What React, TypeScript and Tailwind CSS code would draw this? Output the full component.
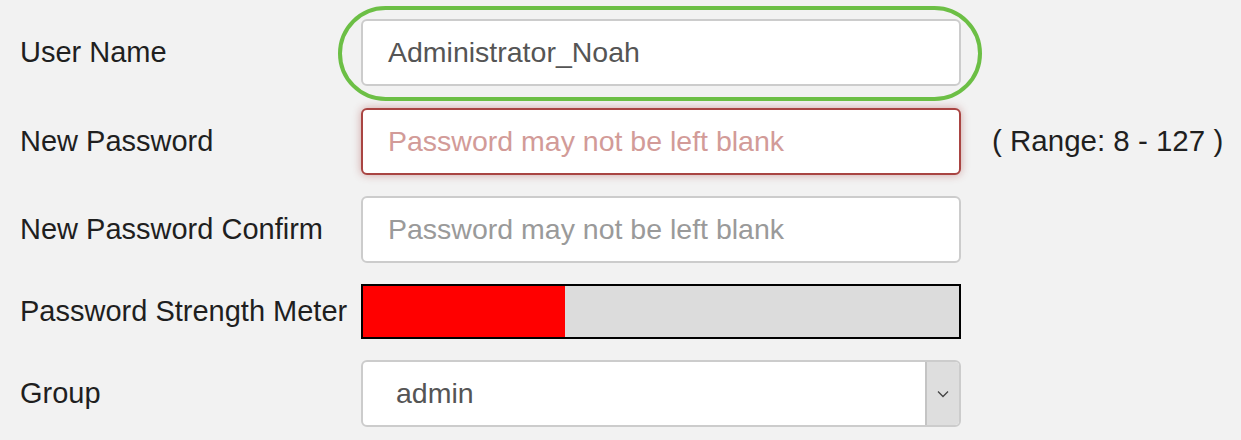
const labelCls = "w-[361px] shrink-0 pl-5 text-[29px] text-[#1f1f1f]";

const App = () => {
  return (
    <div
      className="w-[1241px] h-[440px] bg-[#f2f2f2] pt-[19px] overflow-hidden"
      style={{ fontFamily: '"Liberation Sans", Arial, sans-serif' }}
    >
      {/* User Name */}
      <div className="flex items-center h-[67px]">
        <div className={labelCls}>User Name</div>
        <div className="relative">
          <div className="absolute -left-[23px] -top-[13px] w-[644px] h-[95px] rounded-[48px] border-[4px] border-[#6cbf45] pointer-events-none" />
          <div className="w-[600px] h-[67px] bg-white border-2 border-[#cccccc] rounded-[6px] flex items-center pl-[25px] text-[28.5px] text-[#555]">
            Administrator_Noah
          </div>
        </div>
      </div>

      {/* New Password */}
      <div className="flex items-center h-[67px] mt-[22px]">
        <div className={labelCls}>New Password</div>
        <div className="w-[600px] h-[67px] bg-white border-2 border-[#a94442] rounded-[6px] shadow-[0_0_8px_rgba(169,68,66,0.45)] flex items-center pl-[25px] text-[28.5px] text-[#d29b98]">
          Password may not be left blank
        </div>
        <div className="ml-[31px] text-[29.5px] text-[#1f1f1f]">( Range: 8 - 127 )</div>
      </div>

      {/* New Password Confirm */}
      <div className="flex items-center h-[67px] mt-[21px]">
        <div className={labelCls}>New Password Confirm</div>
        <div className="w-[600px] h-[67px] bg-white border-2 border-[#cccccc] rounded-[6px] flex items-center pl-[25px] text-[28.5px] text-[#9a9a9a]">
          Password may not be left blank
        </div>
      </div>

      {/* Strength meter */}
      <div className="flex items-center h-[55px] mt-[21px]">
        <div className={labelCls}>Password Strength Meter</div>
        <div className="w-[600px] h-[55px] border-2 border-black bg-[#dcdcdc] flex">
          <div className="h-full bg-[#ff0000]" style={{ width: 202 }} />
        </div>
      </div>

      {/* Group */}
      <div className="flex items-center h-[67px] mt-[21px]">
        <div className={labelCls}>Group</div>
        <div className="w-[600px] h-[67px] bg-white border-2 border-[#cccccc] rounded-[6px] flex overflow-hidden">
          <div className="flex-1 flex items-center pl-[33px] text-[28.5px] text-[#555]">admin</div>
          <div className="w-[34px] bg-[#dedede] border-l-2 border-[#c4c4c4] flex items-center justify-center">
            <svg width="12" height="8" viewBox="0 0 12 8" fill="none">
              <polyline points="1,1.5 6,6.5 11,1.5" stroke="#444" strokeWidth="1.3" />
            </svg>
          </div>
        </div>
      </div>
    </div>
  );
};

export default App;
